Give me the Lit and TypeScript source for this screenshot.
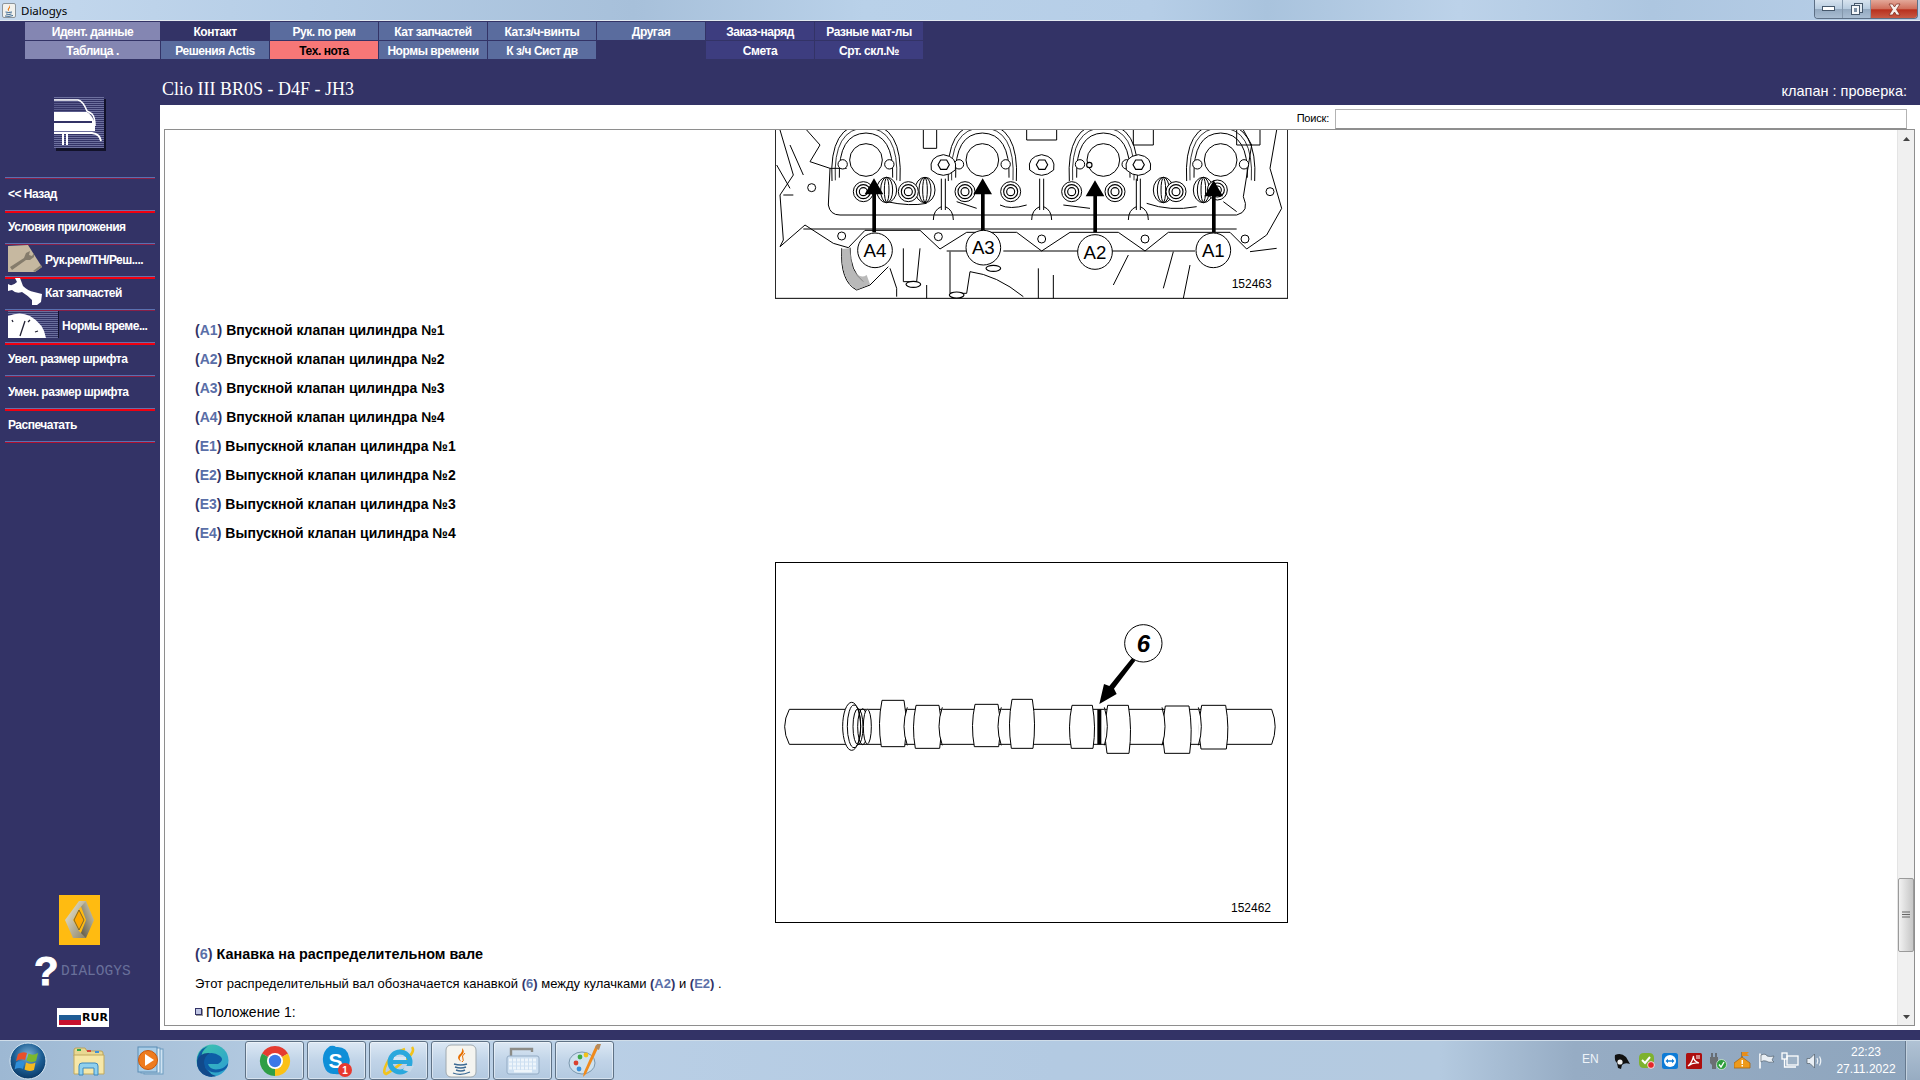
import { LitElement, css, html, svg } from 'lit'
import { customElement } from 'lit/decorators.js'

const menuRows = [
  [
    { label: 'Идент. данные', kind: 'lilac' },
    { label: 'Контакт', kind: 'navy' },
    { label: 'Рук. по рем', kind: 'steel' },
    { label: 'Кат запчастей', kind: 'steel' },
    { label: 'Кат.з/ч-винты', kind: 'steel' },
    { label: 'Другая', kind: 'steel' },
    { label: 'Заказ-наряд', kind: 'indigo' },
    { label: 'Разные мат-лы', kind: 'indigo' },
  ],
  [
    { label: 'Таблица .', kind: 'lilac' },
    { label: 'Решения Actis', kind: 'steel' },
    { label: 'Тех. нота', kind: 'red' },
    { label: 'Нормы времени', kind: 'steel' },
    { label: 'К з/ч Сист дв', kind: 'steel' },
    { label: '', kind: 'navy' },
    { label: 'Смета', kind: 'indigo' },
    { label: 'Срт. скл.№', kind: 'indigo' },
  ],
]

const legend = [
  ['A1', 'Впускной клапан цилиндра №1'],
  ['A2', 'Впускной клапан цилиндра №2'],
  ['A3', 'Впускной клапан цилиндра №3'],
  ['A4', 'Впускной клапан цилиндра №4'],
  ['E1', 'Выпускной клапан цилиндра №1'],
  ['E2', 'Выпускной клапан цилиндра №2'],
  ['E3', 'Выпускной клапан цилиндра №3'],
  ['E4', 'Выпускной клапан цилиндра №4'],
]

const sideIcons = {
  wrench: html`<svg class="side-icon" width="34" height="27" viewBox="0 0 34 27">
    <path d="M0 1 L20 0 L34 22 L27 27 L0 27Z" fill="#c6b8a0"/>
    <path d="M27 27 L34 22 L33 20 L25 26Z" fill="#8d8471"/>
    <path d="M2 22 L16 13 L18 8 L22 6 L21 10 L24 11 L26 8 L26 12 L22 15 L18 15 L4 25Z" fill="#857c6c"/>
  </svg>`,
  parts: html`<svg class="side-icon" width="34" height="27" viewBox="0 0 34 27">
    <path d="M0 6 Q4 9 9 4 L7 0 L12 0 L15 8 Q20 13 26 14 L34 16 L33 24 L29 27 L24 27 L24 22 Q19 17 14 14 Q8 16 4 12 L0 13Z" fill="#fff"/>
  </svg>`,
  clock: html`<svg class="side-icon" width="51" height="27" viewBox="0 0 51 27">
    <defs><pattern id="sideStripes" width="2" height="2" patternUnits="userSpaceOnUse"><rect width="2" height="1" fill="#6a6e9c"/><rect y="1" width="2" height="1" fill="#333366"/></pattern></defs>
    <rect width="50" height="27" fill="url(#sideStripes)"/><rect x="50" width="1" height="27" fill="#14142e"/>
    <path d="M0 5 Q12 0 22 5 Q36 13 38 27 H0Z" fill="#fff"/>
    <path d="M17 10 L12 25 M4 9 L5 11 M22 9 L20 11 M30 20 L27 21" stroke="#223" stroke-width="1.3"/>
  </svg>`,
}

const sideRows: { label: string; line: string; icon?: keyof typeof sideIcons }[] = [
  { label: '<< Назад', line: 'blue' },
  { label: 'Условия приложения', line: 'red' },
  { label: 'Рук.рем/ТН/Реш....', line: 'blue', icon: 'wrench' },
  { label: 'Кат запчастей', line: 'red', icon: 'parts' },
  { label: 'Нормы време...', line: 'blue', icon: 'clock' },
  { label: 'Увел. размер шрифта', line: 'red' },
  { label: 'Умен. размер шрифта', line: 'blue' },
  { label: 'Распечатать', line: 'red' },
]

// both drawings use the zoomed crop as coordinates, 3 units per screen pixel
const rocker = (x: number, y: number, r: number) => svg`
  <path d="M${x - r - 52} ${y + 60} Q${x - r - 62} ${y - 110} ${x} ${y - 112} Q${x + r + 62} ${y - 110} ${x + r + 52} ${y + 60}" fill="none" stroke="#000" stroke-width="3"/>
  <path d="M${x - r - 42} ${y + 58} Q${x - r - 50} ${y - 98} ${x} ${y - 100} Q${x + r + 50} ${y - 98} ${x + r + 42} ${y + 58}" fill="none" stroke="#000" stroke-width="2.4"/>
  <path d="M${x - r - 30} ${y + 50} Q${x - r - 34} ${y - 82} ${x} ${y - 84} Q${x + r + 34} ${y - 82} ${x + r + 30} ${y + 50}" fill="none" stroke="#000" stroke-width="3"/>
  <circle cx=${x - r - 20} cy=${y + 10} r="14" fill="#fff" stroke="#000" stroke-width="3"/>
  <circle cx=${x + r + 20} cy=${y + 10} r="14" fill="#fff" stroke="#000" stroke-width="3"/>
`

const bolt = (x: number, y: number) => svg`
  <circle cx=${x} cy=${y} r="30" fill="#fff" stroke="#000" stroke-width="3"/>
  <circle cx=${x} cy=${y} r="21" fill="#fff" stroke="#000" stroke-width="3.4"/>
  <circle cx=${x} cy=${y} r="12" fill="#fff" stroke="#000" stroke-width="3.4"/>
`

const centreBolt = (x: number, y: number) => svg`
  <path d="M${x - 36} ${y + 10} Q${x} ${y + 42} ${x + 36} ${y + 10} Q${x + 44} ${y - 30} ${x} ${y - 36} Q${x - 44} ${y - 30} ${x - 36} ${y + 10}Z" fill="#fff" stroke="#000" stroke-width="3"/>
  <path d="M${x - 16} ${y - 6} L${x - 8} ${y - 20} H${x + 10} L${x + 18} ${y - 6} L${x + 10} ${y + 8} H${x - 8}Z" fill="#fff" stroke="#000" stroke-width="3.4"/>
  <path d="M${x - 6} ${y + 36} V${y + 130} M${x + 6} ${y + 36} V${y + 130}" stroke="#000" stroke-width="3"/>
  <path d="M${x - 30} ${y + 160} Q${x - 30} ${y + 130} ${x - 6} ${y + 120} M${x + 30} ${y + 160} Q${x + 30} ${y + 130} ${x + 6} ${y + 120}" fill="none" stroke="#000" stroke-width="3"/>
`

const pointer = (x: number, tip: number) => svg`
  <path d="M${x - 5} 322 V${tip + 48} H${x - 28} L${x} ${tip} L${x + 28} ${tip + 48} H${x + 6} V322Z" fill="#000"/>
`

const callout = (x: number, y: number, t: string) => svg`
  <circle cx=${x} cy=${y} r="52" fill="#fff" stroke="#000" stroke-width="3"/>
  <text x=${x} y=${y + 20} text-anchor="middle" font-family="Liberation Sans, sans-serif" font-size="56">${t}</text>
`

const lobes = [
  [328, 410, 241, 380, 1],
  [430, 515, 256, 385, 1],
  [607, 692, 253, 380, 1],
  [718, 795, 238, 385, 0],
  [898, 975, 256, 385, 0],
  [1005, 1083, 256, 400, -1],
  [1178, 1265, 258, 400, -1],
  [1287, 1375, 256, 387, -1],
]

const lobe = ([a, b, t, e, side]: number[]) => svg`
  <path d="M${a + 8} ${t} H${b - 8} Q${b + 4} ${(t + e) / 2} ${b - 6} ${e} H${a + 6} Q${a - 6} ${(t + e) / 2} ${a + 8} ${t}Z" fill="#fff" stroke="#000" stroke-width="3"/>
  ${side === 1 ? svg`<path d="M${b + 2} 262 Q${b - 18} 320 ${b + 2} 376" fill="#fff" stroke="#000" stroke-width="3"/>` : ''}
  ${side === -1 ? svg`<path d="M${a - 2} 262 Q${a + 16} 320 ${a - 2} 376" fill="#fff" stroke="#000" stroke-width="3"/>` : ''}
`

@customElement('app-root')
export class AppRoot extends LitElement {
  static styles = css`
    :host {
      display: block;
      width: 1920px;
      height: 1080px;
      overflow: hidden;
      font-family: "Liberation Sans", Arial, sans-serif;
    }

    .window {
      height: 1080px;
      display: flex;
      flex-direction: column;
      background: #333366;
    }

    .titlebar {
      height: 21px;
      flex: none;
      display: flex;
      align-items: flex-start;
      box-sizing: border-box;
      border-bottom: 1px solid #e2e9f0;
      background: linear-gradient(90deg, #c5d9ee 0, #b5cde6 16%, #a7c0da 33%, #b9d1e9 45%, #b6cee7 60%, #a9c3dd 66%, #bcd2e9 76%, #adc6e0 86%, #b8cfe8 100%);
    }

    .app-icon { margin: 3px 0 0 2px; }

    .app-name {
      margin: 3px 0 0 5px;
      font: 11.5px "Noto Sans", sans-serif;
      line-height: 16px;
      color: #000;
    }

    .controls {
      margin-left: auto;
      margin-right: 2px;
      display: flex;
      height: 18px;
      border: 1px solid #5d6f85;
      border-top: 0;
      border-radius: 0 0 4px 4px;
      overflow: hidden;
    }

    .control {
      width: 27px;
      display: flex;
      align-items: center;
      justify-content: center;
      border-right: 1px solid #8598ad;
      background: linear-gradient(#d7e3ef, #b7cbdf 50%, #94a9c0 52%, #a9bdd2);
    }

    .control.close {
      width: 46px;
      border: 0;
      background: linear-gradient(#e3a899, #cf6d5a 50%, #b8301e 54%, #c75a45);
    }

    .menu {
      margin: 1px 0 0 25px;
      display: grid;
      grid-template-columns: 135px repeat(7, 108px);
      grid-auto-rows: 18px;
      gap: 1px;
      width: 898px;
    }

    .cell {
      display: flex;
      align-items: center;
      justify-content: center;
      padding-top: 1px;
      box-sizing: border-box;
      font-size: 12px;
      font-weight: bold;
      letter-spacing: -0.45px;
      color: #fff;
    }

    .cell.lilac { background: #8486b2; }
    .cell.navy { background: #333366; }
    .cell.steel { background: #5a6c9e; }
    .cell.indigo { background: #3d3d7f; }
    .cell.red { background: #f77777; color: #000; }

    .body {
      flex: 1;
      min-height: 0;
      display: flex;
      padding-bottom: 10px;
    }

    .sidebar {
      width: 160px;
      flex: none;
      display: flex;
      flex-direction: column;
      margin-bottom: -10px;
    }

    .car {
      display: block;
      margin: 38px 0 26px 54px;
    }

    .side-list {
      width: 150px;
      margin-left: 5px;
      border-bottom: 1px solid #5a70b0;
      box-shadow: 0 1px 0 #b01030;
    }

    .side-row {
      height: 33px;
      box-sizing: border-box;
      display: flex;
      align-items: center;
      padding-left: 3px;
      color: #fff;
      font-size: 12px;
      font-weight: bold;
      letter-spacing: -0.5px;
      white-space: nowrap;
    }

    .side-row.blue { border-top: 1px solid #5a70b0; box-shadow: inset 0 1px 0 #8a2048; }
    .side-row.red { border-top: 1px solid #6a6ea8; box-shadow: inset 0 2px 0 #f00010; }
    .side-row.with-icon { align-items: flex-start; }
    .side-row.with-icon span { margin-top: 9px; }
    .side-icon { display: block; margin: 1px 3px 0 0; flex: none; }

    .brand {
      margin-top: auto;
      padding-bottom: 13px;
      display: flex;
      flex-direction: column;
    }

    .renault { display: block; margin-left: 59px; }

    .dialogys {
      display: flex;
      align-items: center;
      height: 28px;
      margin: 12px 0 0 34px;
    }

    .dialogys b {
      width: 26px;
      font: bold 40px/28px "Liberation Sans", sans-serif;
      -webkit-text-stroke: 1px #fff;
      color: #fff;
    }

    .dialogys span {
      margin-left: 1px;
      font: 14.5px "Liberation Mono", monospace;
      color: #69709a;
    }

    .currency {
      display: flex;
      align-items: center;
      gap: 1px;
      width: 52px;
      height: 19px;
      margin: 23px 0 0 57px;
      box-sizing: border-box;
      padding-left: 1px;
      border: 1px solid #fff;
      background: #fff;
      font: bold 11px "DejaVu Sans", sans-serif;
      color: #000;
    }

    .main {
      flex: 1;
      min-width: 0;
      display: flex;
      flex-direction: column;
    }

    .heading {
      height: 46px;
      flex: none;
      display: flex;
      align-items: flex-end;
      justify-content: space-between;
      padding: 0 13px 5px 2px;
      box-sizing: border-box;
      color: #fff;
    }

    .heading h1 {
      margin: 0;
      font: 18px/22px "Liberation Serif", serif;
    }

    .heading span { font-size: 14.5px; line-height: 18px; }

    .panel {
      flex: 1;
      min-height: 0;
      background: #fff;
      display: flex;
      flex-direction: column;
    }

    .search {
      height: 24px;
      flex: none;
      display: flex;
      justify-content: flex-end;
      align-items: flex-start;
      gap: 6px;
      padding: 4px 13px 0 0;
      box-sizing: border-box;
      font-size: 11px;
      line-height: 19px;
      letter-spacing: -0.2px;
      color: #000;
    }

    .search div {
      width: 572px;
      height: 20px;
      box-sizing: border-box;
      border: 1px solid #b3b3b3;
      border-bottom-color: #8f8f8f;
    }

    .frame {
      flex: 1;
      min-height: 0;
      margin: 0 5px 4px 4px;
      display: flex;
      border: 1px solid #8e8e8e;
    }

    .content {
      flex: 1;
      min-width: 0;
      overflow: hidden;
      padding-left: 30px;
      color: #000;
    }

    .figure { display: block; margin-left: 580px; }
    .figure.second { margin-top: 14px; }
    .legend { margin-top: 17px; }
    .closing { margin-top: 17px; }

    .line {
      height: 29px;
      line-height: 29px;
      white-space: nowrap;
      color: #000;
    }

    .line.strong { font-size: 14px; font-weight: bold; }
    .line.strong.wide { font-size: 14.4px; }
    .line.small { font-size: 13px; line-height: 30px; }
    .line.item { font-size: 14px; display: flex; align-items: center; }
    .ref { color: #333366; font-weight: bold; }
    .ref i { color: #5a6fa8; font-style: normal; }

    .bullet {
      width: 5px;
      height: 5px;
      margin: 0 4px 3px 0;
      background: #c0c6e4;
      border: 1px solid #333366;
      box-shadow: 1px 1px 0 #9a9a9a;
    }

    .scrollbar {
      width: 16px;
      flex: none;
      display: flex;
      flex-direction: column;
      background: #f0f0f0;
      border-left: 1px solid #e4e4e4;
    }

    .arrow {
      height: 17px;
      flex: none;
      display: flex;
      align-items: center;
      justify-content: center;
    }

    .thumb {
      height: 74px;
      margin-top: auto;
      margin-bottom: 56px;
      box-sizing: border-box;
      display: flex;
      align-items: center;
      justify-content: center;
      border: 1px solid #9a9a9a;
      border-radius: 2px;
      background: linear-gradient(90deg, #f2f2f2, #dcdcdc 50%, #c6c6c6);
    }

    .taskbar {
      height: 40px;
      flex: none;
      display: flex;
      gap: 3px;
      box-sizing: border-box;
      border-top: 1px solid #cfdde9;
      background: linear-gradient(90deg, #9db8d3 0, #a9c2da 8%, #bcd1e7 20%, #b3cae2 55%, #b4cae0 75%, #96acc4 82%, #8ea5bd 100%);
    }

    .task {
      width: 59px;
      height: 39px;
      flex: none;
      box-sizing: border-box;
      display: flex;
      align-items: center;
      justify-content: center;
    }

    .task.orb { width: 56px; }

    .task.open {
      border: 1px solid #5f7286;
      border-radius: 3px;
      background: linear-gradient(#dce8f4, #c1d4e8 50%, #b3c9e0);
      box-shadow: inset 0 0 0 1px rgba(255, 255, 255, 0.45);
    }

    .tray {
      margin-left: auto;
      display: flex;
      align-items: center;
    }

    .lang {
      width: 24px;
      margin-right: 4px;
      margin-top: -4px;
      font-size: 12px;
      color: #eef3f8;
    }

    .tray-icon {
      width: 24px;
      display: flex;
      justify-content: center;
    }

    .clock {
      width: 78px;
      margin-left: 1px;
      text-align: center;
      font-size: 12px;
      line-height: 17px;
      color: #fff;
    }

    .desktop {
      width: 14px;
      align-self: stretch;
      border-left: 1px solid #66798e;
      box-shadow: inset 1px 0 0 #c4d2df;
      background: linear-gradient(#b0c2d4, #97acc2);
    }
  `

  private renderEngineFigure() {
    const tops = [288, 637, 1000, 1352]
    return html`<svg class="figure" width="513" height="169" viewBox="15 15 1539 507">
      <rect x="16" y="-20" width="1537" height="540" fill="#fff" stroke="#000" stroke-width="3"/>
      <g fill="none" stroke="#000" stroke-width="3">
        <path d="M30 15 L70 150 L30 210 M110 15 L150 60 L120 110 L180 130 L175 240 Q180 270 210 270 H1400 Q1440 260 1420 215 L1445 60 L1420 15"/>
        <path d="M30 210 L40 345 L30 365 L105 300 L190 355 L235 368 L285 316 H450 L510 372 L590 322 H740 L815 378 L900 322 H1045 L1125 378 L1195 322 H1380 L1430 372 L1490 330 L1535 250 L1500 130 L1520 15"/>
        <path d="M100 312 H1400 M700 378 H1275 M530 378 H590 M180 130 H230 M40 210 H70 M20 120 L60 190 M60 60 L100 150"/>
        <path d="M400 370 V470 H440 L450 370 M540 380 V505 H590 L600 440 Q680 450 760 515 M850 450 V520 M805 430 V520 M1075 390 L1030 480 M1210 380 L1180 490 M1260 420 L1240 520 M360 430 L380 490 V515 M470 480 V520 M1440 380 L1520 370"/>
        <path d="M215 370 Q210 470 260 495 L300 480 L355 425 M240 368 Q240 440 280 470"/>
        <path d="M350 230 Q420 245 470 235 M560 230 L620 250 M690 240 Q720 255 770 240 M880 240 L960 250 M1130 235 Q1200 260 1280 245 M1360 230 L1400 260"/>
      </g>
      <path d="M215 372 Q212 468 262 494 L300 478 L290 450 Q268 465 248 430 L240 370Z" fill="#a8a8a8" opacity="0.8"/>
      ${[[215, 333], [505, 335], [815, 342], [1125, 342], [1425, 342], [125, 188], [1500, 200]].map(([x, y]) => svg`<circle cx=${x} cy=${y} r="12" fill="#fff" stroke="#000" stroke-width="3"/>`)}
      ${[[430, 478], [670, 430], [560, 510]].map(([x, y]) => svg`<ellipse cx=${x} cy=${y} rx="22" ry="9" fill="#fff" stroke="#000" stroke-width="3.4"/>`)}
      ${[[460, 15, 500, 70], [770, 15, 860, 45], [1090, 15, 1150, 60], [1400, 15, 1470, 60]].map(([x, y, a, b]) => svg`<path d="M${x} ${y} V${b} H${a} V${y}" fill="none" stroke="#000" stroke-width="3"/>`)}
      ${tops.map((x) => rocker(x, 108, 50))}
      ${[520, 815, 1105].map((x) => centreBolt(x, 125))}
      ${[[350, 195], [465, 195], [1180, 195], [1300, 195]].map(([x, y]) => svg`
        <ellipse cx=${x} cy=${y} rx="30" ry="38" fill="#fff" stroke="#000" stroke-width="3"/>
        <ellipse cx=${x} cy=${y} rx="18" ry="38" fill="none" stroke="#000" stroke-width="3"/>
        <ellipse cx=${x} cy=${y} rx="7" ry="36" fill="none" stroke="#000" stroke-width="3"/>`)}
      ${[[280, 200], [415, 200], [585, 200], [722, 200], [905, 200], [1035, 200], [1218, 200], [1342, 195]].map(([x, y]) => bolt(x, y))}
      ${tops.map((x) => svg`<circle cx=${x} cy="105" r="49" fill="#fff" stroke="#000" stroke-width="3"/>`)}
      <circle cx="958" cy="120" r="8" fill="#fff" stroke="#000" stroke-width="3.4"/>
      ${pointer(312, 160)}
      ${pointer(638, 160)}
      ${pointer(975, 166)}
      ${pointer(1331, 166)}
      ${callout(315, 376, 'A4')}
      ${callout(640, 368, 'A3')}
      ${callout(975, 381, 'A2')}
      ${callout(1330, 376, 'A1')}
      <text x="1385" y="488" font-family="Liberation Sans, sans-serif" font-size="36">152463</text>
    </svg>`
  }

  private renderCamFigure() {
    return html`<svg class="figure second" width="513" height="361" viewBox="15 -174 1539 1083">
      <rect x="16.5" y="-172.5" width="1536" height="1080" fill="#fff" stroke="#000" stroke-width="3"/>
      <path d="M58 268 H1505 Q1526 320 1505 373 H58 Q30 320 58 268Z" fill="#fff" stroke="#000" stroke-width="3"/>
      <ellipse cx="245" cy="319" rx="27" ry="72" fill="#fff" stroke="#000" stroke-width="3"/>
      <ellipse cx="252" cy="319" rx="20" ry="64" fill="none" stroke="#000" stroke-width="3"/>
      <ellipse cx="264" cy="320" rx="15" ry="54" fill="none" stroke="#000" stroke-width="3"/>
      <ellipse cx="278" cy="320" rx="15" ry="54" fill="none" stroke="#000" stroke-width="3"/>
      <ellipse cx="292" cy="320" rx="12" ry="52" fill="#fff" stroke="#000" stroke-width="3"/>
      ${lobes.map((l) => lobe(l))}
      <rect x="982" y="268" width="12" height="105" fill="#000"/>
      <circle cx="1120" cy="70" r="56" fill="#fff" stroke="#000" stroke-width="3"/>
      <path d="M1086 114 L1096 122 L1032 206 L1040 222 L988 252 L1002 192 L1018 198Z" fill="#000"/>
      <text x="1120" y="96" text-anchor="middle" font-family="Liberation Sans, sans-serif" font-size="72" font-weight="bold" font-style="italic">6</text>
      <text x="1383" y="877" font-family="Liberation Sans, sans-serif" font-size="36">152462</text>
    </svg>`
  }

  private renderCar() {
    return html`<svg class="car" width="52" height="54" viewBox="0 0 52 54">
      <defs><pattern id="carStripes" width="2" height="2" patternUnits="userSpaceOnUse"><rect width="2" height="1" fill="#6d709e"/><rect y="1" width="2" height="1" fill="#333366"/></pattern></defs>
      <rect x="2" y="2" width="50" height="52" fill="#12122a"/>
      <rect width="50" height="51" fill="url(#carStripes)"/>
      <path d="M0 3 H24 Q29 4 33 14 L38 17 Q41 20 41 30 H0Z" fill="#333366" opacity="0.35"/>
      <path d="M0 3 H24 Q29 4 33 14 L38 17 Q41 20 41 29" fill="none" stroke="#fff" stroke-width="1.6"/>
      <path d="M0 15 H33 Q38 18 41 26 V34 H0Z" fill="#fff"/>
      <path d="M0 25 H38" stroke="#333366" stroke-width="2"/>
      <path d="M0 36 H38 Q46 37 47 44" fill="none" stroke="#fff" stroke-width="1.8"/>
      <path d="M9 37 V48 M13 37 V48" stroke="#fff" stroke-width="2"/>
    </svg>`
  }

  private renderRenault() {
    return html`<svg class="renault" width="41" height="50" viewBox="0 0 41 50">
      <defs>
        <linearGradient id="rnA" x1="0" x2="1" y1="0" y2="1"><stop offset="0" stop-color="#f0ecd8"/><stop offset="1" stop-color="#8c8468"/></linearGradient>
        <linearGradient id="rnB" x1="1" x2="0" y1="0" y2="1"><stop offset="0" stop-color="#dcd6bc"/><stop offset="1" stop-color="#4f4a38"/></linearGradient>
      </defs>
      <rect width="41" height="50" fill="#ffbb11"/>
      <path d="M20 6 L27 6 L35 25 L27 43 L20 43 L27 25Z" fill="url(#rnB)"/>
      <path d="M27 6 L20 6 L6 25 L14 43 L27 43 L20 36 L14 25 L20 14Z" fill="url(#rnA)"/>
      <path d="M20 15 L25 25 L20 35 L15 25Z" fill="#ffa800" stroke="#5b5235" stroke-width="0.8"/>
    </svg>`
  }

  private renderTaskIcons() {
    return {
      orb: html`<svg width="38" height="38" viewBox="0 0 38 38">
        <defs><radialGradient id="orb" cx="0.5" cy="0.35" r="0.7"><stop offset="0" stop-color="#7fb3d8"/><stop offset="0.55" stop-color="#1c5e94"/><stop offset="1" stop-color="#07305c"/></radialGradient></defs>
        <circle cx="19" cy="19" r="18" fill="url(#orb)" stroke="#dcebf5" stroke-width="1"/>
        <path d="M9 12 Q14 9 18 11 L16 18 Q12 16 7 19Z" fill="#e8502a"/>
        <path d="M19.5 11.5 Q24 14 29 11 L27 19 Q22 21 17.5 18.5Z" fill="#7cb92e"/>
        <path d="M7 20.5 Q12 18 15.5 20 L14 27 Q10 25 5.5 27.5Z" fill="#2f8ed8"/>
        <path d="M17 20.5 Q22 23 26.5 20.5 L25 28 Q20 30 15.5 27.5Z" fill="#f5b921"/>
      </svg>`,
      folder: html`<svg width="32" height="30" viewBox="0 0 32 30">
        <path d="M1 4 Q1 2 3 2 H12 L14 5 H28 Q30 5 30 7 V10 H1Z" fill="#e9d892" stroke="#b9a35c"/>
        <rect x="4" y="3" width="4" height="2" fill="#2fa84a"/><rect x="14" y="4" width="4" height="2" fill="#d5463a"/><rect x="22" y="5" width="4" height="2" fill="#3f8fd8"/>
        <path d="M1 9 H31 V28 H1Z" fill="#f6e7a8" stroke="#c0a95f"/>
        <path d="M6 29 V20 Q6 17 9 17 H22 Q25 17 25 20 V29 H21 V22 H10 V29Z" fill="#8fd0ee" stroke="#3d89c0"/>
      </svg>`,
      media: html`<svg width="28" height="30" viewBox="0 0 28 30">
        <rect x="7" y="3" width="19" height="25" fill="#cfe3f2" stroke="#6d9cc0"/>
        <rect x="4" y="2" width="19" height="25" fill="#e3eef7" stroke="#6d9cc0"/>
        <rect x="1" y="1" width="19" height="25" fill="#a9cde7" stroke="#5b8db5"/>
        <circle cx="11" cy="14" r="9.5" fill="#ee7b1f" stroke="#c9570b"/>
        <path d="M8 8 L17 14 L8 20Z" fill="#fff"/>
      </svg>`,
      edge: html`<svg width="33" height="33" viewBox="0 0 33 33">
        <defs><linearGradient id="edgeA" x1="0" x2="1" y1="0" y2="1"><stop offset="0" stop-color="#3fc8a8"/><stop offset="1" stop-color="#2b9bd6"/></linearGradient></defs>
        <circle cx="16.5" cy="16.5" r="16" fill="url(#edgeA)"/>
        <path d="M32 19 Q32 25 26 27 Q17 31 11 25 Q5 18 10 12 Q5 19 12 26 Q18 33 16 33 Q3 32 1 18 Q1 6 12 2 Q4 8 6 14 Q14 5 24 12 Q29 16 22 20 H12 Q14 27 24 25 Q29 24 32 19Z" fill="#0e5da6"/>
        <path d="M1 17 Q0 28 11 32 Q17 33 20 32 Q9 29 8 19 Q8 12 14 9 Q4 8 1 17Z" fill="#114a8b"/>
      </svg>`,
      chrome: html`<svg width="32" height="32" viewBox="0 0 32 32">
        <path d="M16 16 L3 8.5 A15 15 0 0 1 29 8.5Z" fill="#e53b30"/>
        <path d="M16 16 L29 8.5 A15 15 0 0 1 16 31Z" fill="#fbc116"/>
        <path d="M16 16 L16 31 A15 15 0 0 1 3 8.5Z" fill="#2f9e46"/>
        <circle cx="16" cy="16" r="8" fill="#fff"/><circle cx="16" cy="16" r="6.2" fill="#3b78e7"/>
      </svg>`,
      skype: html`<svg width="32" height="32" viewBox="0 0 32 32">
        <path d="M9 1 Q13 0 15 2 Q26 1 28 12 Q30 16 27 22 Q24 31 14 29 Q6 30 3 21 Q-1 8 9 1Z" fill="#0f8fd8"/>
        <text x="14.5" y="23" text-anchor="middle" font-family="Liberation Sans, sans-serif" font-size="21" font-weight="bold" fill="#fff">S</text>
        <circle cx="24" cy="25" r="7" fill="#e8392f"/>
        <text x="24" y="29" text-anchor="middle" font-family="Liberation Sans, sans-serif" font-size="10" font-weight="bold" fill="#fff">1</text>
      </svg>`,
      ie: html`<svg width="32" height="32" viewBox="0 0 32 32">
        <path d="M29 2 Q33 7 21 16 Q9 26 3 29 Q-1 28 4 18 Q9 8 22 4" fill="none" stroke="#f2c31b" stroke-width="2.6"/>
        <circle cx="17" cy="17" r="10" fill="none" stroke="#2aa8dd" stroke-width="5"/>
        <path d="M8 15 H27 V19 H8Z" fill="#2aa8dd"/>
        <path d="M11 12 H23 V15 H11Z" fill="#d5e7f4"/>
        <path d="M22 21 H31 L27 27 L20 25Z" fill="#c5d9ea"/>
      </svg>`,
      java: html`<svg width="32" height="34" viewBox="0 0 32 34">
        <rect x="1" y="1" width="30" height="32" rx="5" fill="#f4f4f0" stroke="#9fa8ae"/>
        <path d="M17 4 Q21 8 16 12 Q13 15 17 18 Q11 15 14 11 Q18 8 17 4Z" fill="#e76f00"/>
        <path d="M20 9 Q16 12 18 15 Q19 17 17 18" fill="none" stroke="#e76f00" stroke-width="1"/>
        <path d="M9 20 Q16 22 22 20 M10 23 Q16 25 21 23 M11 26 Q16 28 20 26" fill="none" stroke="#3c6a94" stroke-width="1.5"/>
        <path d="M8 29 Q16 32 25 28" fill="none" stroke="#3c6a94" stroke-width="1.2"/>
      </svg>`,
      keyboard: html`<svg width="34" height="30" viewBox="0 0 34 30">
        <path d="M5 10 V3 H26 V6" fill="none" stroke="#8c8c88" stroke-width="2.4"/>
        <rect x="1" y="10" width="32" height="18" rx="2" fill="#cddff1" stroke="#93abc4"/>
        ${[12.5, 16.5, 20.5].map((y) => [3, 7, 11, 15, 19, 23, 27].map((x) => svg`<rect x=${x} y=${y} width="3" height="3" fill="#eef5fb"/>`))}
        <rect x="8" y="24" width="18" height="2.4" fill="#eef5fb"/>
      </svg>`,
      paint: html`<svg width="34" height="34" viewBox="0 0 34 34">
        <ellipse cx="14" cy="19" rx="13" ry="11" fill="#cfe2ef" stroke="#7a97ad"/>
        <circle cx="8" cy="19" r="2.4" fill="#d9402f"/><circle cx="12" cy="13" r="2.4" fill="#3eaa48"/>
        <circle cx="18" cy="11" r="2.4" fill="#f2c21b"/><circle cx="11" cy="25" r="2.4" fill="#3a8ed8"/>
        <path d="M31 2 L18 30 L15 33 L16 28 L28 1Z" fill="#ef8a1d"/>
        <path d="M28 1 L31 2 L33 0 Z M27 4 L31 6 L33 0 L29 0Z" fill="#b58a5c"/>
      </svg>`,
    }
  }

  private renderTrayIcons() {
    return [
      html`<svg width="16" height="18" viewBox="0 0 16 18"><path d="M1 3 Q7 0 12 5 L16 12 Q11 10 8 13 L7 17 L4 16 L3 11 Q0 8 1 3Z" fill="#111"/><circle cx="6" cy="10" r="2.6" fill="#eee"/></svg>`,
      html`<svg width="17" height="17" viewBox="0 0 17 17"><path d="M1 6 Q1 1 6 1 H11 Q16 1 16 6 V11 Q16 16 11 16 H6 Q1 16 1 11Z" fill="#7eb22e"/><path d="M4 8 L7 11 L12 5" fill="none" stroke="#fff" stroke-width="2"/><circle cx="13" cy="13" r="3.4" fill="#e5262a" stroke="#fff" stroke-width="0.8"/></svg>`,
      html`<svg width="16" height="16" viewBox="0 0 16 16"><rect width="16" height="16" rx="2.5" fill="#0e7bd6"/><circle cx="8" cy="8" r="6" fill="#fff"/><path d="M3.5 8 L6 5.8 V7.2 H10 V5.8 L12.5 8 L10 10.2 V8.8 H6 V10.2Z" fill="#0e7bd6"/></svg>`,
      html`<svg width="16" height="16" viewBox="0 0 16 16"><rect width="16" height="16" rx="1.5" fill="#ad0e0e"/><path d="M2 13 Q6 10 7.5 3 Q7 8 13 10 Q7 9 2 13Z" fill="none" stroke="#fff" stroke-width="1.2"/><path d="M10 3 H14 M10 5 H14" stroke="#fff"/></svg>`,
      html`<svg width="18" height="18" viewBox="0 0 18 18"><path d="M3 1 V5 M7 1 V5" stroke="#555" stroke-width="1.4"/><path d="M1 5 H9 V11 L7 13 V17 H3 V13 L1 11Z" fill="#6b6f73"/><circle cx="12.5" cy="12.5" r="5" fill="#2e9e3c" stroke="#e4f4e4" stroke-width="0.7"/><path d="M10 12.5 L12 15 L15 10" fill="none" stroke="#fff" stroke-width="1.4"/></svg>`,
      html`<svg width="17" height="17" viewBox="0 0 17 17"><path d="M8 0 V6" stroke="#6d4a14"/><path d="M8 0 H15 L13 2 L15 4 H8Z" fill="#e88d1a"/><path d="M0 16 V11 L8 5 L16 11 V16Z" fill="#ee9a1c" stroke="#a86410" stroke-width="0.8"/><path d="M7.5 8 H9 V12 H7.5Z M7.5 13 H9 V14.5 H7.5Z" fill="#fff"/></svg>`,
      html`<svg width="17" height="16" viewBox="0 0 17 16"><path d="M2 0.5 V15.5" stroke="#fff" stroke-width="1.6"/><path d="M3 2 Q8 0 9 3 Q12 4 16 3 L14 7 L16 9 Q10 10 8 8 Q5 7 3 9Z" fill="#e9eff5" stroke="#4a5763" stroke-width="0.6"/></svg>`,
      html`<svg width="18" height="17" viewBox="0 0 18 17"><rect x="6" y="4" width="11" height="9" fill="#9eb2c6" stroke="#fff" stroke-width="1.3"/><rect x="1" y="1" width="5" height="6" fill="none" stroke="#fff" stroke-width="1.3"/><path d="M3.5 7 V15 H15" fill="none" stroke="#fff" stroke-width="1.3"/></svg>`,
      html`<svg width="17" height="16" viewBox="0 0 17 16"><path d="M1 5.5 H4 L8.5 1 V15 L4 10.5 H1Z" fill="#e9eff5" stroke="#56616c" stroke-width="0.7"/><path d="M11 5 Q12.5 8 11 11 M13.5 3.5 Q16 8 13.5 12.5" fill="none" stroke="#eef3f7" stroke-width="1.2"/></svg>`,
    ]
  }

  render() {
    const task = this.renderTaskIcons()
    return html`
      <div class="window">
        <div class="titlebar">
          <svg class="app-icon" width="14" height="15" viewBox="0 0 14 15">
            <rect x="0.5" y="0.5" width="13" height="14" rx="1.5" fill="#f2f2ee" stroke="#8c959c"/>
            <path d="M7 2 Q9 4 7 6 Q6 7 7.5 8.5 Q4.5 7 6.5 5 Q8 3.5 7 2Z" fill="#e76f00"/>
            <path d="M3.5 9 Q7 10 10 9 M4 11 Q7 12 9.5 11 M3 13 Q7 14 11 12.5" fill="none" stroke="#3c6a94"/>
          </svg>
          <span class="app-name">Dialogys</span>
          <div class="controls">
            <div class="control"><svg width="13" height="6"><rect x="0.5" y="0.5" width="12" height="4" fill="#fff" stroke="#46586c"/></svg></div>
            <div class="control"><svg width="12" height="12"><rect x="3.5" y="0.5" width="8" height="9" fill="#dfe8f1" stroke="#46586c"/><rect x="0.5" y="2.5" width="8" height="9" fill="#f4f7fa" stroke="#46586c"/><rect x="3" y="5" width="3" height="4" fill="#7e91a6"/></svg></div>
            <div class="control close"><svg width="15" height="13" viewBox="0 0 15 13"><path d="M2 1 H5.5 L7.5 4 L9.5 1 H13 L9.5 6.5 L13 12 H9.5 L7.5 9 L5.5 12 H2 L5.5 6.5Z" fill="#f6eeea" stroke="#7a2a1c" stroke-width="0.7"/></svg></div>
          </div>
        </div>

        <div class="menu">
          ${menuRows.flat().map((c) => html`<div class="cell ${c.kind}">${c.label}</div>`)}
        </div>

        <div class="body">
          <aside class="sidebar">
            ${this.renderCar()}
            <div class="side-list">
              ${sideRows.map((r) => html`
                <div class="side-row ${r.line} ${r.icon ? 'with-icon' : ''}">
                  ${r.icon ? sideIcons[r.icon] : ''}
                  <span>${r.label}</span>
                </div>
              `)}
            </div>
            <div class="brand">
              ${this.renderRenault()}
              <div class="dialogys"><b>?</b><span>DIALOGYS</span></div>
              <div class="currency">
                <svg width="22" height="15" viewBox="0 0 22 15"><rect width="22" height="5" fill="#fff"/><rect y="5" width="22" height="5" fill="#1f5c95"/><rect y="10" width="22" height="5" fill="#c8102e"/></svg>
                RUR
              </div>
            </div>
          </aside>

          <main class="main">
            <div class="heading">
              <h1>Clio III BR0S - D4F - JH3</h1>
              <span>клапан : проверка:</span>
            </div>
            <div class="panel">
              <div class="search"><span>Поиск:</span><div></div></div>
              <div class="frame">
                <div class="content">
                  ${this.renderEngineFigure()}
                  <div class="legend">
                    ${legend.map(([code, text]) => html`
                      <div class="line strong"><span class="ref">(<i>${code}</i>)</span> ${text}</div>
                    `)}
                  </div>
                  ${this.renderCamFigure()}
                  <div class="closing">
                    <div class="line strong wide"><span class="ref">(<i>6</i>)</span> Канавка на распределительном вале</div>
                    <div class="line small">Этот распределительный вал обозначается канавкой <span class="ref">(<i>6</i>)</span> между кулачками <span class="ref">(<i>A2</i>)</span> и <span class="ref">(<i>E2</i>)</span> .</div>
                    <div class="line item"><span class="bullet"></span>Положение 1:</div>
                  </div>
                </div>
                <div class="scrollbar">
                  <div class="arrow"><svg width="7" height="4"><path d="M3.5 0 L7 4 H0Z" fill="#444"/></svg></div>
                  <div class="thumb"><svg width="8" height="8"><path d="M0 1 H8 M0 3.5 H8 M0 6 H8" stroke="#666"/></svg></div>
                  <div class="arrow"><svg width="7" height="4"><path d="M0 0 H7 L3.5 4Z" fill="#444"/></svg></div>
                </div>
              </div>
            </div>
          </main>
        </div>

        <div class="taskbar">
          <div class="task orb">${task.orb}</div>
          <div class="task">${task.folder}</div>
          <div class="task">${task.media}</div>
          <div class="task">${task.edge}</div>
          <div class="task open">${task.chrome}</div>
          <div class="task open">${task.skype}</div>
          <div class="task open">${task.ie}</div>
          <div class="task open">${task.java}</div>
          <div class="task open">${task.keyboard}</div>
          <div class="task open">${task.paint}</div>
          <div class="tray">
            <span class="lang">EN</span>
            ${this.renderTrayIcons().map((i) => html`<div class="tray-icon">${i}</div>`)}
            <div class="clock">22:23<br>27.11.2022</div>
            <div class="desktop"></div>
          </div>
        </div>
      </div>
    `
  }
}

declare global {
  interface HTMLElementTagNameMap {
    'app-root': AppRoot
  }
}
